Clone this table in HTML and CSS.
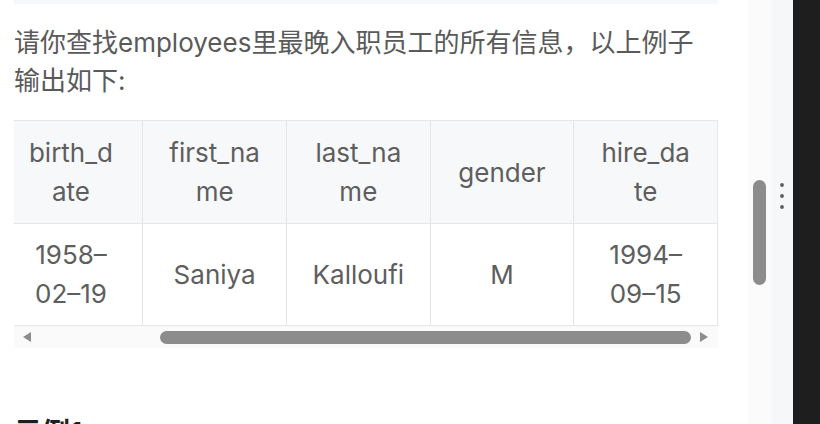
FILE: index.html
```html
<!DOCTYPE html>
<html lang="zh-CN">
<head>
<meta charset="utf-8">
<title>示例</title>
<link rel="stylesheet" href="styles.css">
</head>
<body>
<div class="layout">
  <main class="main">
    <div class="code-end"></div>
    <p class="desc">请你查找employees里最晚入职员工的所有信息，以上例子输出如下:</p>
    <div class="table-scroll">
      <div class="table-view">
        <table class="result">
          <thead>
            <tr>
              <th class="c0">emp_no</th>
              <th>birth_d<wbr>ate</th>
              <th>first_na<wbr>me</th>
              <th>last_na<wbr>me</th>
              <th>gender</th>
              <th>hire_da<wbr>te</th>
            </tr>
          </thead>
          <tbody>
            <tr>
              <td class="c0">10008</td>
              <td>1958–02–19</td>
              <td>Saniya</td>
              <td>Kalloufi</td>
              <td>M</td>
              <td>1994–09–15</td>
            </tr>
          </tbody>
        </table>
      </div>
      <div class="hscroll">
        <span class="arrow arrow-left"></span>
        <div class="hscroll-track"><div class="hscroll-thumb"></div></div>
        <span class="arrow arrow-right"></span>
      </div>
    </div>
    <h3 class="example">示例1</h3>
  </main>
  <div class="vtrack"><div class="vthumb"></div></div>
  <div class="handle">
    <svg class="dots" width="8" height="28" viewBox="0 0 8 28"><circle cx="4" cy="3" r="1.9" fill="#5c5c5c"/><circle cx="4" cy="14" r="1.9" fill="#5c5c5c"/><circle cx="4" cy="25" r="1.9" fill="#5c5c5c"/></svg>
  </div>
  <div class="dark"></div>
</div>
</body>
</html>
```
FILE: styles.css
```css
html, body {
  margin: 0;
  padding: 0;
  height: 100%;
  overflow: hidden;
  background: #fff;
}
body {
  font-family: Inter, "Noto Sans CJK SC", sans-serif;
}
.layout {
  display: flex;
  height: 424px;
}
.main {
  width: 748px;
  flex: none;
  padding-left: 14px;
  box-sizing: border-box;
  overflow: hidden;
}
.code-end {
  width: 704px;
  height: 4px;
  background: #f7f8fa;
}
.desc {
  margin: 20px 0 0;
  width: 704px;
  font-size: 26px;
  line-height: 38px;
  color: #5a5a5a;
}
.table-scroll {
  margin-top: 20px;
  width: 704px;
}
.table-view {
  overflow: hidden;
  width: 704px;
}
.result {
  margin-left: -164px;
  border-collapse: separate;
  border-spacing: 0;
  table-layout: fixed;
  font-size: 26px;
  line-height: 39px;
  color: #5e5e5e;
}
.result th, .result td {
  box-sizing: border-box;
  width: 144px;
  padding: 12px 21px;
  text-align: center;
  font-weight: normal;
  border-right: 1px solid #e6e6e6;
  border-bottom: 1px solid #e6e6e6;
}
.result th {
  background: #f7f8fa;
  border-top: 1px solid #e6e6e6;
  height: 104px;
}
.result td {
  padding-top: 11px;
  padding-bottom: 12px;
  height: 102px;
}
.result .c0 {
  width: 150px;
}
.hscroll {
  height: 22px;
  background: #fafafa;
  display: flex;
  align-items: center;
}
.arrow {
  width: 0;
  height: 0;
  border-top: 5px solid transparent;
  border-bottom: 5px solid transparent;
}
.arrow-left {
  margin-left: 9px;
  border-right: 8px solid #8c8c8c;
}
.arrow-right {
  margin-right: 10px;
  border-left: 8px solid #8c8c8c;
}
.hscroll-track {
  flex: 1;
  display: flex;
  padding-left: 129px;
  padding-right: 9px;
}
.hscroll-thumb {
  flex: 1;
  height: 13px;
  border-radius: 7px;
  background: #8c8c8c;
}
.example {
  margin: 64px 0 0;
  font-size: 28px;
  line-height: 42px;
  font-weight: bold;
  color: #1f1f1f;
}
.vtrack {
  width: 23px;
  flex: none;
  background: #fbfbfb;
  padding: 180px 0 0 5px;
  box-sizing: border-box;
}
.vthumb {
  width: 13px;
  height: 105px;
  border-radius: 7px;
  background: #8c8c8c;
}
.handle {
  width: 22px;
  flex: none;
  background: #f6f7f9;
  padding: 182px 0 0 7px;
  box-sizing: border-box;
}
.dots {
  display: block;
}
.dark {
  flex: 1;
  background: #1e1e1e;
}
```
